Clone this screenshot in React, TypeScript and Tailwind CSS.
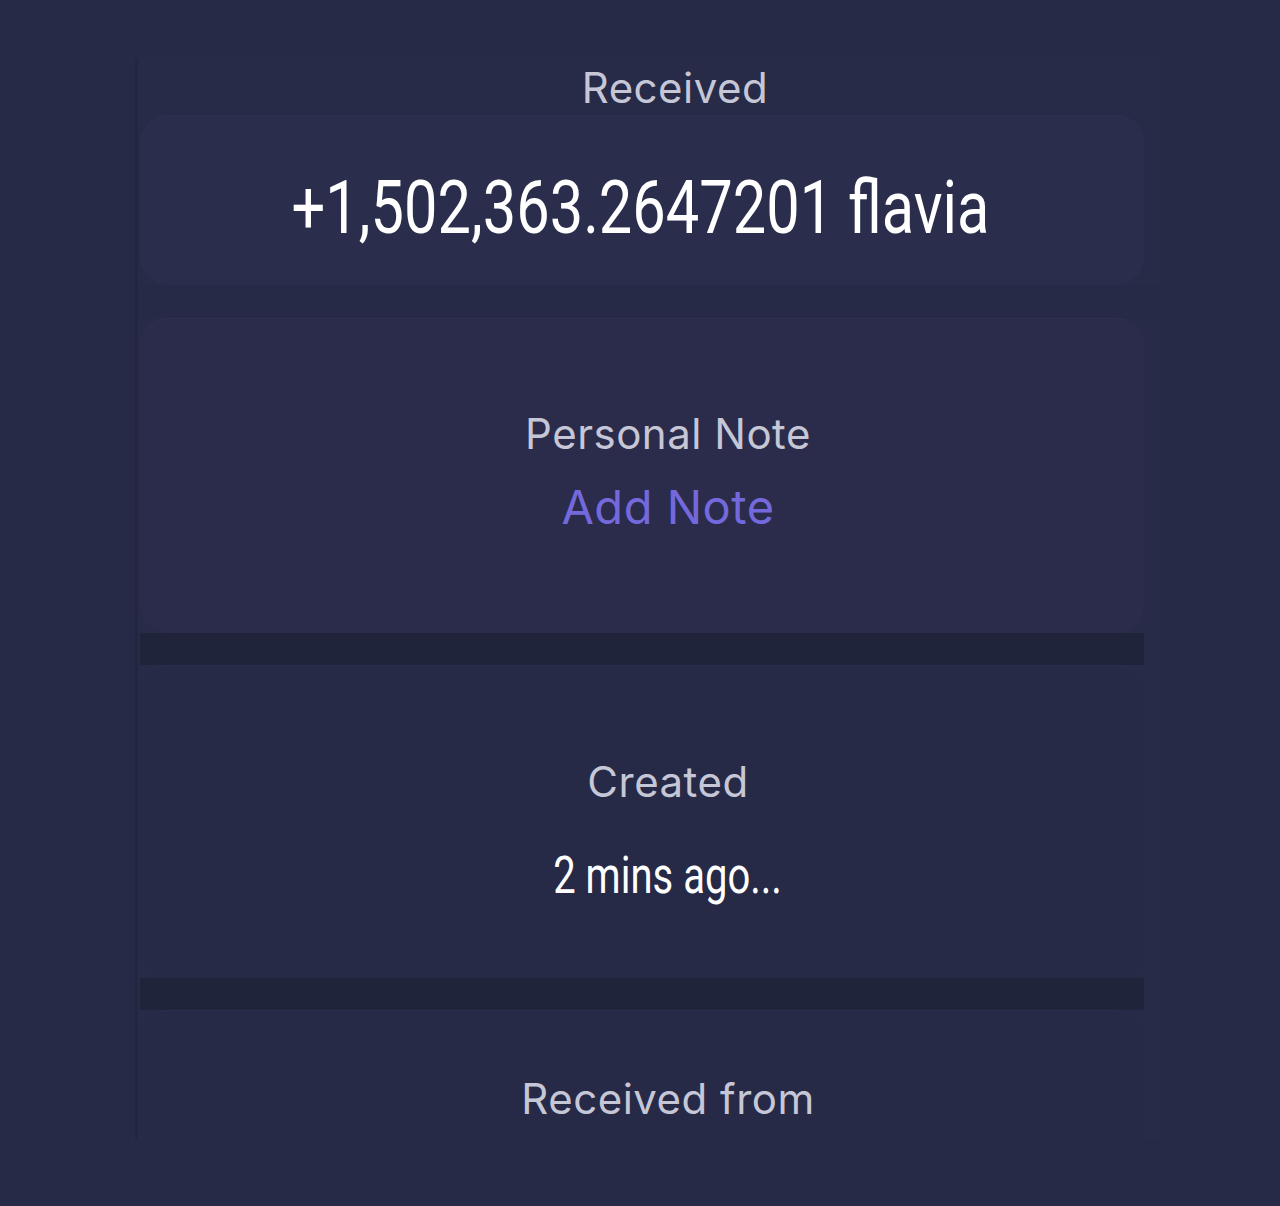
import React from "react";

const label = "font-['Inter','Noto_Sans',sans-serif] text-[#c6c7d6] text-[42px] leading-[50px] tracking-[0.5px] whitespace-nowrap";
const cond = "font-['Roboto','Liberation_Sans',sans-serif] text-white whitespace-nowrap inline-block";

export default function App() {
  return (
    <div className="min-h-[1206px] w-full bg-[#262a46] pt-[58px]">
      <div className="ml-[135px] w-[1025px] h-[1082px] bg-[#272b48] border-l-[3px] border-[#22263f] flex flex-col">
        <div className="h-[57px] flex items-start justify-center pl-[52px]">
          <span className={`${label} mt-[5px]`}>Received</span>
        </div>
        <div className="ml-[2px] w-[1004px] h-[170px] rounded-[28px] bg-[#2a2e4c] border-t border-[#2e3252] flex items-start justify-center pr-[3px]">
          <span className={`${cond} text-[74px] leading-[80px] mt-[52px] scale-x-[0.805]`}>+1,502,363.2647201 flavia</span>
        </div>
        <div className="h-[33px] bg-[#262a46]" />
        <div className="ml-[2px] w-[1004px] h-[315px] rounded-[28px] bg-[#2b2c4b] border-t border-[#2f3150] flex flex-col items-center pt-[90px] pl-[52px]">
          <span className={label}>Personal Note</span>
          <span className="font-['Inter','Noto_Sans',sans-serif] text-[#7469dc] text-[47px] leading-[56px] mt-[20px] tracking-[0.5px] whitespace-nowrap">Add Note</span>
        </div>
        <div className="h-[32px] bg-[#20243b] ml-[2px] w-[1004px]" />
        <div className="ml-[2px] w-[1004px] h-[313px] rounded-[28px] bg-[#262a47] border-t border-[#2b2f4d] flex flex-col items-center pt-[91px] pl-[52px]">
          <span className={label}>Created</span>
          <span className={`${cond} text-[52px] leading-[60px] mt-[39px] scale-x-[0.77]`}>2 mins ago...</span>
        </div>
        <div className="h-[32px] bg-[#20243b] ml-[2px] w-[1004px]" />
        <div className="ml-[2px] w-[1004px] h-[128px] rounded-t-[28px] bg-[#262a47] border-t border-[#2b2f4d] flex flex-col items-center pt-[63px] pl-[52px]">
          <span className={label}>Received from</span>
        </div>
      </div>
    </div>
  );
}
